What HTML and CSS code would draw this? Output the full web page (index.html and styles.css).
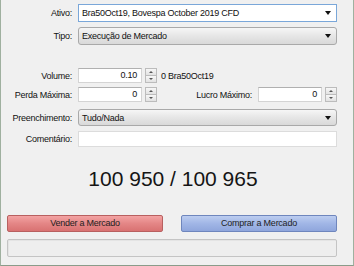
FILE: index.html
```html
<!DOCTYPE html>
<html>
<head>
<meta charset="utf-8">
<link rel="stylesheet" href="styles.css">
</head>
<body>
<div class="window">
  <div class="row r-ativo">
    <span class="lbl">Ativo:</span>
    <div class="combo edit"><span class="val">Bra50Oct19, Bovespa October 2019 CFD</span><i class="arrow"></i></div>
  </div>
  <div class="row r-tipo">
    <span class="lbl">Tipo:</span>
    <div class="combo"><span class="val">Execução de Mercado</span><i class="arrow"></i></div>
  </div>
  <div class="row r-volume">
    <span class="lbl">Volume:</span>
    <div class="line">
      <div class="num">0.10</div>
      <div class="spin"><b class="up"></b><b class="down"></b></div>
      <span class="note">0 Bra50Oct19</span>
    </div>
  </div>
  <div class="row r-perda">
    <span class="lbl">Perda Máxima:</span>
    <div class="line split">
      <div class="group">
        <div class="num">0</div>
        <div class="spin"><b class="up"></b><b class="down"></b></div>
      </div>
      <div class="group">
        <span class="lbl2">Lucro Máximo:</span>
        <div class="num">0</div>
        <div class="spin"><b class="up"></b><b class="down"></b></div>
      </div>
    </div>
  </div>
  <div class="row r-pre">
    <span class="lbl">Preenchimento:</span>
    <div class="combo"><span class="val">Tudo/Nada</span><i class="arrow"></i></div>
  </div>
  <div class="row r-com">
    <span class="lbl">Comentário:</span>
    <div class="text"></div>
  </div>
  <div class="price">100 950 / 100 965</div>
  <div class="buttons">
    <div class="btn sell">Vender a Mercado</div>
    <div class="btn buy">Comprar a Mercado</div>
  </div>
  <div class="progress"></div>
</div>
</body>
</html>
```
FILE: styles.css
```css
html, body {
  margin: 0;
  padding: 0;
  background: #f0f0f0;
}
.window {
  width: 354px;
  height: 266px;
  box-sizing: border-box;
  border-left: 1px solid #9fb09f;
  border-right: 1px solid #9fb09f;
  border-bottom: 1px solid #8a9c8a;
  background: #f0f0f0;
  padding: 4px 16px 0 6px;
  font-family: "Liberation Sans", Arial, sans-serif;
  font-size: 9px;
  letter-spacing: -0.25px;
  color: #111;
  display: flex;
  flex-direction: column;
}
.row {
  display: grid;
  grid-template-columns: 65px 1fr;
  column-gap: 6px;
  align-items: center;
}
.lbl {
  text-align: right;
  white-space: nowrap;
}
.r-ativo { height: 18px; }
.r-tipo { height: 18px; margin-top: 5px; }
.r-volume { height: 15px; margin-top: 23px; }
.r-perda { height: 15px; margin-top: 4px; }
.r-pre { height: 17px; margin-top: 7px; }
.r-com { height: 16px; margin-top: 5px; }

.combo {
  height: 100%;
  box-sizing: border-box;
  border: 1px solid #a9a9a9;
  border-radius: 3px;
  background: linear-gradient(#f6f6f6, #e6e6e6 50%, #d9d9d9);
  display: flex;
  align-items: center;
  padding: 0 5px 0 3px;
}
.combo.edit {
  background: #fff;
  border-color: #7aa7d9;
  border-radius: 0;
  padding-left: 3px;
}
.val {
  flex: 1;
  white-space: nowrap;
}
.arrow {
  width: 0;
  height: 0;
  border-left: 3px solid transparent;
  border-right: 3px solid transparent;
  border-top: 4px solid #111;
}
.line {
  display: flex;
  align-items: center;
  height: 100%;
}
.split {
  justify-content: space-between;
}
.group {
  display: flex;
  align-items: center;
  height: 100%;
}
.num {
  width: 64px;
  height: 100%;
  box-sizing: border-box;
  background: #fff;
  border: 1px solid #d4d4d4;
  border-top-color: #b0b0b0;
  text-align: right;
  padding-right: 4px;
  line-height: 13px;
}
.spin {
  width: 12px;
  height: 100%;
  margin-left: 3px;
  display: flex;
  flex-direction: column;
}
.spin b {
  flex: 1;
  box-sizing: border-box;
  border: 1px solid #bcbcbc;
  background: linear-gradient(#f7f7f7, #e2e2e2);
  display: flex;
  align-items: center;
  justify-content: center;
}
.spin b + b { border-top: none; }
.spin b::after {
  content: "";
  width: 0;
  height: 0;
  border-left: 2px solid transparent;
  border-right: 2px solid transparent;
}
.spin .up::after { border-bottom: 2px solid #555; }
.spin .down::after { border-top: 2px solid #555; }
.note {
  margin-left: 4px;
  white-space: nowrap;
}
.lbl2 {
  margin-right: 6px;
  white-space: nowrap;
}
.text {
  height: 100%;
  box-sizing: border-box;
  background: #fff;
  border: 1px solid #dcdcdc;
}
.price {
  margin-top: 20px;
  height: 24px;
  line-height: 24px;
  font-size: 21px;
  letter-spacing: 0;
  text-align: center;
  color: #151515;
  padding-left: 2px;
}
.buttons {
  margin-top: 24px;
  display: grid;
  grid-template-columns: 1fr 1fr;
  column-gap: 18px;
}
.btn {
  height: 17px;
  box-sizing: border-box;
  border-radius: 2px;
  text-align: center;
  line-height: 15px;
  color: #1e1e1e;
}
.sell {
  border: 1px solid #b86060;
  background: linear-gradient(#f3a3a3, #e48686 50%, #d97272);
}
.buy {
  border: 1px solid #6f86bd;
  background: linear-gradient(#bccdf0, #a1b6e6 50%, #8fa6dc);
}
.progress {
  margin-top: 7px;
  height: 18px;
  box-sizing: border-box;
  border: 1px solid #c4c4c4;
  border-radius: 2px;
  box-shadow: inset 1px 1px 0 #e4e4e4;
  background: #eeeeee;
}
```
